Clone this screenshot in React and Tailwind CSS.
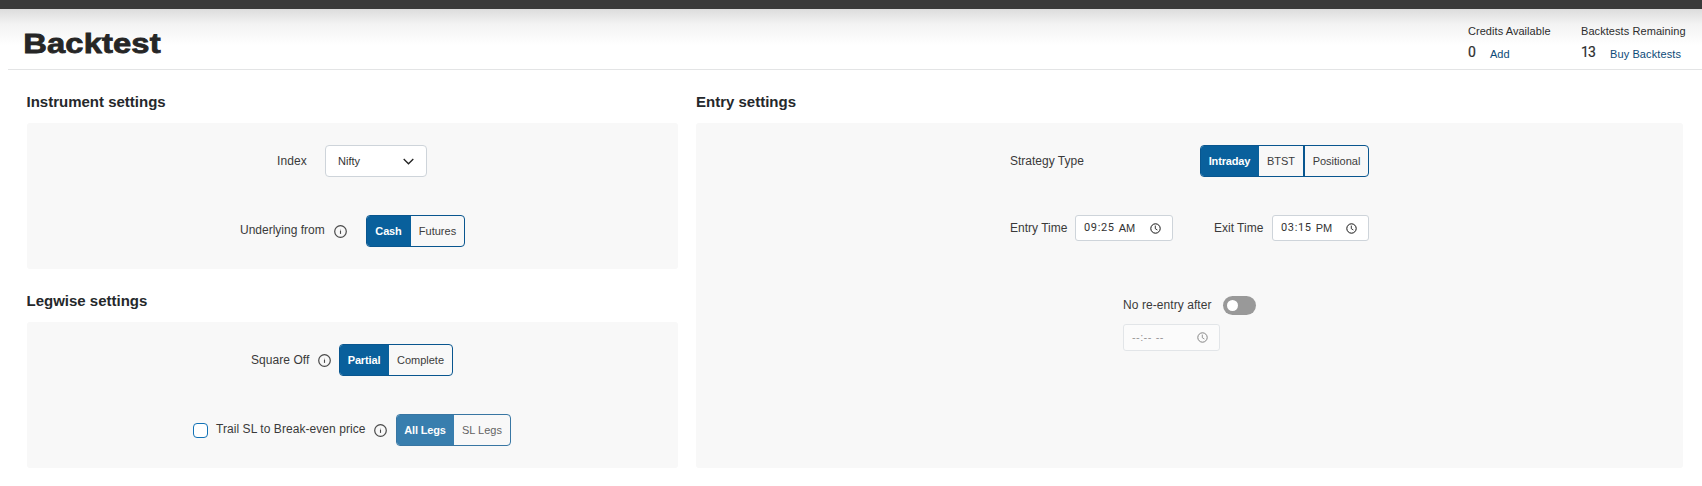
const Info = () => (
  <svg className="h-[13px] w-[13px] shrink-0" viewBox="0 0 13 13" fill="none" stroke="#4a4a4a">
    <circle cx="6.5" cy="6.5" r="5.8" strokeWidth="1.2" />
    <path d="M6.5 5.5v3.4" strokeWidth="1.1" />
    <path d="M6.5 3.9v.9" strokeWidth="1" opacity=".25" />
  </svg>
);

const Clock = () => (
  <svg className="h-[11px] w-[11px] shrink-0" viewBox="0 0 11 11" fill="none" stroke="#111">
    <circle cx="5.5" cy="5.5" r="4.7" strokeWidth="1" />
    <path d="M5.3 2.6v3.100l2.100 1.300" strokeWidth=".85" />
  </svg>
);

const on = "flex items-center justify-center bg-[#09609c] pr-px font-bold tracking-[-0.15px] text-white";
const off = "flex items-center justify-center";

function Toggle({ className, children }) {
  return (
    <div className={"flex h-8 shrink-0 overflow-hidden rounded-[4px] border border-[#09568f] text-[11px] text-[#3c3c3c] " + className}>
      {children}
    </div>
  );
}

function TimeField({ time, half, className }) {
  return (
    <div className={"flex shrink-0 items-center justify-between rounded-[3px] border bg-white pl-2 pr-[11px] text-[11px] text-[#333] " + className}>
      <span className="flex items-center whitespace-pre">
        {time}
        <span className="ml-[4px] pt-px">{half}</span>
      </span>
      <Clock />
    </div>
  );
}

const Digits = ({ children }) => <span className="font-['Roboto',sans-serif] tracking-[0.65px]">{children}</span>;

const Title = ({ children }) => (
  <h2 className="h-[22px] text-[15px] font-bold leading-[22px] text-[#25282b]">{children}</h2>
);

export default function App() {
  return (
    <div className="h-[486px] w-[1702px] overflow-hidden bg-white font-['Liberation_Sans',Arial,sans-serif] text-xs text-[#3a3a3a]">
      <div className="h-[9px] bg-[#3a3a3a]" />
      <header className="h-[61px] bg-linear-to-b from-[#dcdcdc] via-[#f3f3f3] via-25% to-white to-60% pl-2">
        <div className="flex h-[61px] justify-between border-b border-[#e3e4e5]">
          <h1 className="origin-left scale-x-[1.17] pl-[13px] pt-[15px] text-[28px] font-bold leading-10 tracking-[0.1px] text-[#262626] [-webkit-text-stroke:0.8px_#262626]">Backtest</h1>
          <div className="flex pt-[14px] text-[11px] text-[#2d2d2d]">
            <div className="w-[113px]">
              <div className="tracking-[0.05px] leading-4">Credits Available</div>
              <div className="flex leading-[28px]">
                <span className="w-[22px] font-['Roboto',sans-serif] text-[14px] tracking-[-0.8px] leading-[26px] [-webkit-text-stroke:0.2px_#2d2d2d]">0</span>
                <span className="pt-px text-[#0d4a78]">Add</span>
              </div>
            </div>
            <div className="w-[121px]">
              <div className="whitespace-nowrap tracking-[0.07px] leading-4">Backtests Remaining</div>
              <div className="flex leading-[28px]">
                <span className="w-[29px] font-['Roboto',sans-serif] text-[14px] tracking-[-0.8px] leading-[26px] [-webkit-text-stroke:0.2px_#2d2d2d]">13</span>
                <span className="pt-px tracking-[0.1px] text-[#0d4a78]">Buy Backtests</span>
              </div>
            </div>
          </div>
        </div>
      </header>

      <main className="flex gap-[18px] pl-[27px] pt-[21px]">
        <div className="w-[651px]">
          <div className="-ml-[0.5px]"><Title>Instrument settings</Title></div>
          <section className="mt-[10px] h-[146px] rounded-[3px] bg-[#f8f8f8] pt-[22px]">
            <div className="flex h-8 items-center pl-[250px]">
              <span className="w-12 tracking-[0.1px]">Index</span>
              <div className="flex h-8 w-[102px] items-center justify-between rounded-[4px] border border-[#ced4da] bg-white px-3 text-[11px] text-[#333]">
                Nifty
                <svg className="h-[7px] w-[11px]" viewBox="0 0 11 7" fill="none" stroke="#222" strokeWidth="1.3">
                  <path d="M.7 1l4.800 4.800L10.300 1" />
                </svg>
              </div>
            </div>
            <div className="mt-[38px] flex h-8 items-center pl-[213px]">
              <span className="w-[94px] pb-0.5">Underlying from</span>
              <Info />
              <Toggle className="ml-[19px] w-[99px]">
                <div className={on + " w-11"}>Cash</div>
                <div className={off + " flex-1"}>Futures</div>
              </Toggle>
            </div>
          </section>

          <div className="-ml-[0.5px] mt-[21px]"><Title>Legwise settings</Title></div>
          <section className="mt-[10px] h-[146px] rounded-[3px] bg-[#f8f8f8] pt-[22px]">
            <div className="flex h-8 items-center pl-[224px]">
              <span className="w-[67px] tracking-[0.05px]">Square Off</span>
              <Info />
              <Toggle className="ml-2 w-[114px]">
                <div className={on + " w-[49px]"}>Partial</div>
                <div className={off + " flex-1"}>Complete</div>
              </Toggle>
            </div>
            <div className="mt-[38px] flex h-8 items-center pl-[166px]">
              <span className="mr-2 h-[15px] w-[15px] rounded-[4px] border border-[#1272b6] bg-white" />
              <span className="w-[158px] pb-0.5 tracking-[0.06px]">Trail SL to Break-even price</span>
              <Info />
              <Toggle className="ml-[9px] w-[115px] opacity-80">
                <div className={on + " w-[57px]"}>All Legs</div>
                <div className={off + " flex-1"}>SL Legs</div>
              </Toggle>
            </div>
          </section>
        </div>

        <div className="w-[987px]">
          <Title>Entry settings</Title>
          <section className="mt-[10px] h-[345px] rounded-[3px] bg-[#f8f8f8] pt-[22px]">
            <div className="flex h-8 w-[673px] items-center justify-between pl-[314px]">
              <span>Strategy Type</span>
              <Toggle className="w-[169px]">
                <div className={on + " w-[58px]"}>Intraday</div>
                <div className={off + " w-[46px] border-r-2 border-[#09568f]"}>BTST</div>
                <div className={off + " flex-1"}>Positional</div>
              </Toggle>
            </div>
            <div className="mt-[38px] flex h-[26px] items-center pl-[314px]">
              <span className="w-[65px]">Entry Time</span>
              <TimeField time={<Digits>09:25</Digits>} half="AM" className="h-[26px] w-[98px] border-[#ced4da]" />
              <span className="ml-[41px] w-[58px]">Exit Time</span>
              <TimeField time={<Digits>03:15</Digits>} half="PM" className="h-[26px] w-[97px] border-[#ced4da]" />
            </div>
            <div className="mt-[54px] flex h-5 items-center pl-[427px]">
              <span className="w-[100px] tracking-[0.07px]">No re-entry after</span>
              <span className="flex h-[19px] w-[33px] items-center rounded-full bg-[#999] pl-1">
                <span className="h-[11px] w-[11px] rounded-full bg-white" />
              </span>
            </div>
            <div className="mt-[9px] pl-[427px]">
              <TimeField
                time={<span className="tracking-[0.4px]">--:--</span>}
                half={<span className="-mt-px block tracking-[0.4px]">--</span>}
                className="h-[27px] w-[97px] border-[#ced4da] opacity-50"
              />
            </div>
          </section>
        </div>
      </main>
    </div>
  );
}
